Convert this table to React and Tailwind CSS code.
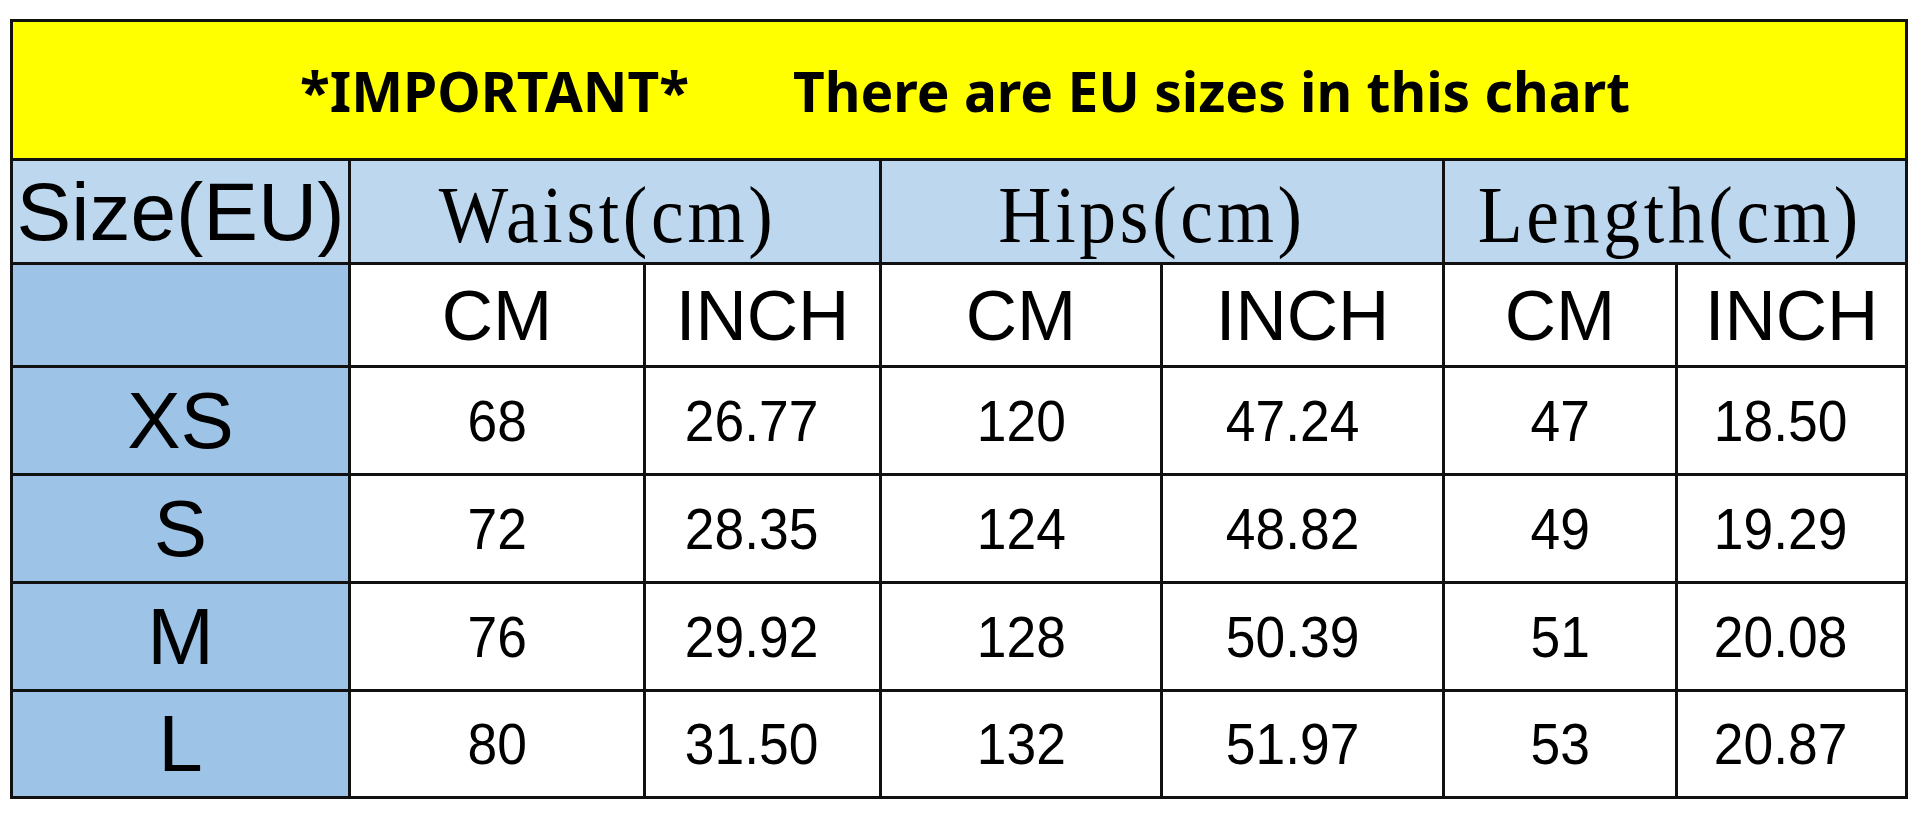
import React from "react";

const sans = { fontFamily: '"Liberation Sans", Arial, sans-serif' };
const serif = { fontFamily: '"Liberation Serif", "Times New Roman", serif' };

const rows = [
  ["XS", "68", "26.77", "120", "47.24", "47", "18.50"],
  ["S", "72", "28.35", "124", "48.82", "49", "19.29"],
  ["M", "76", "29.92", "128", "50.39", "51", "20.08"],
  ["L", "80", "31.50", "132", "51.97", "53", "20.87"],
];

const valuePad = ["", "pr-[22px]", "", "pr-[20px]", "", "pr-[22px]"];

function Cell({ children, className = "" }) {
  return (
    <div className={"flex items-center justify-center leading-none " + className}>
      {children}
    </div>
  );
}

export default function App() {
  return (
    <div className="w-[1920px] h-[813px] bg-white pt-[19px] pl-[10px] overflow-hidden">
      <div
        className="grid w-[1898px] grid-cols-[335px_292px_233px_278px_279px_230px_227px] grid-rows-[136px_101px_100px_105px_105px_105px_104px] gap-[3px] p-[3px] bg-[#111111]"
        style={sans}
      >
        <div
          className="col-span-7 flex items-center justify-center gap-[104px] bg-[#ffff00] pl-[12px] text-[55px] font-bold text-black leading-none"
          style={{ fontFamily: '"Noto Sans", "Open Sans", sans-serif' }}
        >
          <span>*IMPORTANT*</span>
          <span>There are EU sizes in this chart</span>
        </div>

        <Cell className="bg-[#bdd7ee] text-[82px] text-black">Size(EU)</Cell>
        <Cell className="col-span-2 bg-[#bdd7ee] text-black pt-[6px] pr-[14px]">
          <span className="inline-block scale-x-[0.92] text-[80px] tracking-[4px]" style={serif}>Waist(cm)</span>
        </Cell>
        <Cell className="col-span-2 bg-[#bdd7ee] text-black pt-[6px] pr-[20px]">
          <span className="inline-block scale-x-[0.92] text-[80px] tracking-[4px]" style={serif}>Hips(cm)</span>
        </Cell>
        <Cell className="col-span-2 bg-[#bdd7ee] text-black pt-[6px] pr-[10px]">
          <span className="inline-block scale-x-[0.92] text-[80px] tracking-[4px]" style={serif}>Length(cm)</span>
        </Cell>

        <div className="bg-[#9dc3e6]" />
        {["CM", "INCH", "CM", "INCH", "CM", "INCH"].map((t, i) => (
          <Cell key={i} className="bg-white text-[71px] text-black">{t}</Cell>
        ))}

        {rows.map((r) => (
          <React.Fragment key={r[0]}>
            <Cell className="bg-[#9dc3e6] text-[80px] text-black">{r[0]}</Cell>
            {r.slice(1).map((v, i) => (
              <Cell key={i} className={"bg-white text-black " + valuePad[i]}>
                <span className="inline-block scale-x-[0.92] text-[58px]">{v}</span>
              </Cell>
            ))}
          </React.Fragment>
        ))}
      </div>
    </div>
  );
}
